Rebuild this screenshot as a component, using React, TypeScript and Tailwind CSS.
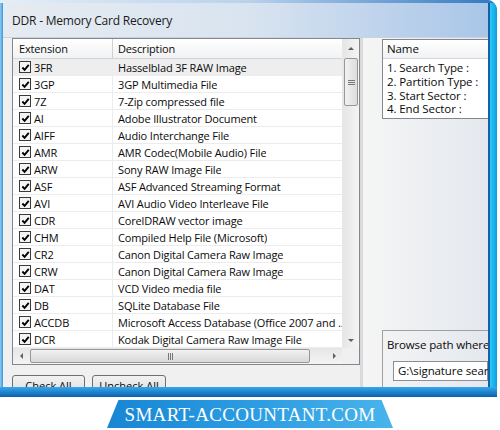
import React from "react";

const rows: [string, string][] = [
  ["3FR", "Hasselblad 3F RAW Image"],
  ["3GP", "3GP Multimedia File"],
  ["7Z", "7-Zip compressed file"],
  ["AI", "Adobe Illustrator Document"],
  ["AIFF", "Audio Interchange File"],
  ["AMR", "AMR Codec(Mobile Audio) File"],
  ["ARW", "Sony RAW Image File"],
  ["ASF", "ASF Advanced Streaming Format"],
  ["AVI", "AVI Audio Video Interleave File"],
  ["CDR", "CorelDRAW vector image"],
  ["CHM", "Compiled Help File (Microsoft)"],
  ["CR2", "Canon Digital Camera Raw Image"],
  ["CRW", "Canon Digital Camera Raw Image"],
  ["DAT", "VCD Video media file"],
  ["DB", "SQLite Database File"],
  ["ACCDB", "Microsoft Access Database (Office 2007 and ..."],
  ["DCR", "Kodak Digital Camera Raw Image File"],
];

function Check() {
  return (
    <div className="w-[12px] h-[12px] shrink-0 border border-[#3a3a3a] bg-[#f4f4f4] flex items-center justify-center">
      <svg viewBox="0 0 10 10" className="w-[9px] h-[9px]">
        <path d="M1.5 5 L4 7.6 L8.6 2.2" stroke="#000" strokeWidth="2.1" fill="none" />
      </svg>
    </div>
  );
}

function Arrow({ dir }: { dir: "up" | "down" | "left" | "right" }) {
  const d =
    dir === "up"
      ? "M1 5 L4 2 L7 5 Z"
      : dir === "down"
      ? "M1 3 L4 6 L7 3 Z"
      : dir === "left"
      ? "M5 1 L2 4 L5 7 Z"
      : "M3 1 L6 4 L3 7 Z";
  return (
    <svg viewBox="0 0 8 8" className="w-[8px] h-[8px]">
      <path d={d} fill="#606060" />
    </svg>
  );
}

export default function App() {
  return (
    <div
      className="w-[500px] h-[430px] bg-white overflow-hidden text-[#0a0a0a]"
      style={{ fontFamily: '"Open Sans", "Noto Sans", sans-serif' }}
    >
      {/* window */}
      <div className="w-[497px] h-[397px] flex flex-col rounded-tr-[10px] overflow-hidden bg-[#1d86d2]">
        <div className="h-[3px] bg-gradient-to-r from-[#e4eef8] via-[#b8d2ec] to-[#2f78c0]" />
        <div className="flex-1 flex min-h-0">
          <div className="w-[3px] bg-gradient-to-r from-[#8fcdf3] to-[#3a95dc]" />
          <div className="flex-1 flex flex-col min-w-0 overflow-hidden bg-[#efefef]">
            {/* title */}
            <div className="h-[35px] shrink-0 flex items-center pl-[9px] pt-[2px] bg-gradient-to-r from-[#e6ebf1] via-[#d9e4f0] to-[#a9c6e8] border-b border-[#c9d4e0]">
              <span className="text-[12px] leading-none text-[#1a1a1a] tracking-[-0.2px]">
                DDR - Memory Card Recovery
              </span>
            </div>
            {/* content */}
            <div className="flex-1 flex min-h-0">
              {/* left side */}
              <div className="w-[357px] shrink-0 flex flex-col pl-[9px] bg-[#f0f0f0]">
                <div className="w-[348px] h-[327px] border border-[#828790] bg-white flex flex-col tracking-[-0.15px]">
                  <div className="flex h-[309px]">
                    <div className="w-[329px] flex flex-col overflow-hidden">
                      <div className="h-[20px] shrink-0 flex bg-gradient-to-b from-white to-[#f1f2f4] border-b border-[#d5d5d5] text-[11px] leading-none">
                        <div className="w-[100px] shrink-0 flex items-center pl-[6px] border-r border-[#d0d0d0]">
                          Extension
                        </div>
                        <div className="flex items-center pl-[5px]">Description</div>
                      </div>
                      {rows.map(([e, d], i) => (
                        <div
                          key={e + i}
                          className={`h-[17px] shrink-0 flex border-b border-[#ececec] text-[11px] leading-none ${
                            i === 0 ? "bg-[#eeeeee]" : "bg-white"
                          }`}
                        >
                          <div className="w-[100px] shrink-0 flex items-center pl-[6px] gap-[3px] border-r border-[#ececec]">
                            <Check />
                            <span>{e}</span>
                          </div>
                          <div className="flex items-center pl-[5px] whitespace-nowrap overflow-hidden">{d}</div>
                        </div>
                      ))}
                    </div>
                    {/* vscroll */}
                    <div className="w-[17px] shrink-0 flex flex-col bg-gradient-to-r from-[#e6e6e6] to-[#f4f4f4] border-l border-[#e8e8e8]">
                      <div className="h-[19px] flex items-center justify-center">
                        <Arrow dir="up" />
                      </div>
                      <div className="mx-[1px] h-[48px] rounded-[2px] border border-[#979797] bg-gradient-to-r from-[#f2f2f2] to-[#dcdcdc] flex flex-col items-center justify-center gap-[1px]">
                        <div className="w-[7px] h-px bg-[#777]" />
                        <div className="w-[7px] h-px bg-[#777]" />
                        <div className="w-[7px] h-px bg-[#777]" />
                      </div>
                      <div className="flex-1" />
                      <div className="h-[17px] flex items-center justify-center">
                        <Arrow dir="down" />
                      </div>
                    </div>
                  </div>
                  {/* hscroll */}
                  <div className="h-[16px] flex">
                    <div className="w-[329px] flex bg-gradient-to-b from-[#e6e6e6] to-[#f4f4f4]">
                      <div className="w-[17px] flex items-center justify-center">
                        <Arrow dir="left" />
                      </div>
                      <div className="w-[280px] my-[1px] rounded-[2px] border border-[#979797] bg-gradient-to-b from-[#f2f2f2] to-[#d8d8d8] flex items-center justify-center gap-[1px]">
                        <div className="w-px h-[7px] bg-[#777]" />
                        <div className="w-px h-[7px] bg-[#777]" />
                        <div className="w-px h-[7px] bg-[#777]" />
                      </div>
                      <div className="flex-1" />
                      <div className="w-[17px] flex items-center justify-center">
                        <Arrow dir="right" />
                      </div>
                    </div>
                    <div className="flex-1 bg-[#f0f0f0]" />
                  </div>
                </div>
                <div className="flex gap-[7px] mt-[10px]">
                  <div className="w-[73px] h-[22px] border border-[#707070] rounded-[3px] bg-gradient-to-b from-[#f2f2f2] to-[#dcdcdc] flex items-center justify-center text-[11px]">
                    Check All
                  </div>
                  <div className="w-[74px] h-[22px] border border-[#707070] rounded-[3px] bg-gradient-to-b from-[#f2f2f2] to-[#dcdcdc] flex items-center justify-center text-[11px]">
                    Uncheck All
                  </div>
                </div>
              </div>
              {/* splitter + right */}
              <div className="w-[3px] shrink-0 bg-[#dadada]" />
              <div className="flex-1 flex flex-col pl-[19px] pt-[1px] bg-gradient-to-r from-[#f5f5f5] to-[#e4e8ee] min-w-0 tracking-[-0.1px]">
                <div className="h-[80px] border-l border-t border-b border-[#828790] bg-white flex flex-col text-[11.5px] leading-none">
                  <div className="h-[19px] shrink-0 flex items-center pl-[4px] bg-gradient-to-b from-white to-[#f1f2f4] border-b border-[#d5d5d5]">
                    Name
                  </div>
                  <div className="flex flex-col pt-[2px] pl-[4px]">
                    <div className="h-[14px] flex items-center whitespace-nowrap">1. Search Type :</div>
                    <div className="h-[13.5px] flex items-center whitespace-nowrap">2. Partition Type :</div>
                    <div className="h-[13.5px] flex items-center whitespace-nowrap">3. Start Sector :</div>
                    <div className="h-[13.5px] flex items-center whitespace-nowrap">4. End Sector :</div>
                  </div>
                </div>
                <div className="flex-1" />
                <div className="h-[57px] border-l border-t border-[#a0a0a0] flex flex-col pl-[4px] pt-[8px] text-[11.5px] leading-none">
                  <div className="whitespace-nowrap">Browse path where the</div>
                  <div className="mt-[10px] ml-[6px] h-[20px] border border-[#8a8f98] bg-white flex items-center pl-[4px] whitespace-nowrap">
                    G:\signature search
                  </div>
                </div>
              </div>
            </div>
          </div>
          <div className="w-[9px] flex">
            <div className="w-[2px] bg-[#1660a8]" />
            <div className="flex-1 bg-gradient-to-r from-[#2ccaf8] to-[#0a9ee2]" />
          </div>
        </div>
        <div className="h-[10px] bg-gradient-to-b from-[#35a8ec] to-[#0c60ae]" />
      </div>
      {/* banner */}
      <div className="flex justify-center mt-[3px]">
        <div className="w-[286px] h-[28px] bg-gradient-to-r from-[#1886d4] via-[#2b9ce2] to-[#48b4ec] [clip-path:polygon(4%_0,96%_0,100%_100%,0_100%)] flex items-center justify-center">
          <span
            className="text-white text-[19px] leading-none tracking-[0.3px]"
            style={{ fontFamily: '"Liberation Serif", serif' }}
          >
            SMART-ACCOUNTANT.COM
          </span>
        </div>
      </div>
    </div>
  );
}
